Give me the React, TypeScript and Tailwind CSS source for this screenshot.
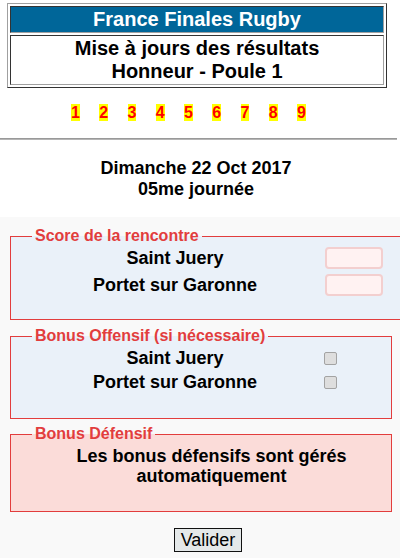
import React from 'react';

const rounds = ['1', '2', '3', '4', '5', '6', '7', '8', '9'];
const teams = ['Saint Juery', 'Portet sur Garonne'];

function Legend({ children }: { children: React.ReactNode }) {
  return (
    <legend className="px-[3px] text-[16px] leading-[18px] font-bold text-[#e23d3d]">{children}</legend>
  );
}

export default function App() {
  return (
    <div className="flex h-[558px] w-[400px] flex-col bg-white font-['Liberation_Sans',Arial,sans-serif] text-black">
      {/* header table */}
      <div className="ml-[7px] mt-[3px] flex w-[380px] flex-col gap-[2px] border border-t-[#a0a0a0] border-l-[#a0a0a0] border-r-[#333] border-b-[#333] p-[2px]">
        <div className="border border-t-[#333] border-l-[#333] border-r-[#a0a0a0] border-b-[#a0a0a0] bg-[#006699] py-px text-center text-[20px] leading-[23px] font-bold text-white">
          France Finales Rugby
        </div>
        <div className="border border-t-[#333] border-l-[#333] border-r-[#a0a0a0] border-b-[#a0a0a0] py-px text-center text-[20px] leading-[23px] font-bold">
          <div>Mise à jours des résultats</div>
          <div>Honneur - Poule 1</div>
        </div>
      </div>

      {/* journées */}
      <div className="ml-[71px] mt-[16px] flex gap-[19.35px]">
        {rounds.map((r) => (
          <span key={r} className="bg-[#ffff00] text-[16px] leading-[17px] font-bold text-[#ff0000]">
            {r}
          </span>
        ))}
      </div>

      <div className="mt-[17px] w-[397px] border-t border-b border-t-[#999] border-b-[#b5b5b5]" />

      <div className="mt-[17.5px] w-[392px] text-center text-[18px] leading-[21px] font-bold">
        <div>Dimanche 22 Oct 2017</div>
        <div>05me journée</div>
      </div>

      <div className="mt-[17.5px] flex flex-1 flex-col bg-[#f9f9f9] pt-[10px]">
        <fieldset className="ml-[10px] w-[382px] border border-[#e23d3d] bg-[#eaf1f9] px-[21px] pt-[2px] pb-[23px]">
          <Legend>Score de la rencontre</Legend>
          <div className="flex flex-col gap-[5px]">
            {teams.map((t) => (
              <div key={t} className="flex items-center">
                <div className="w-[286px] text-center text-[18px] leading-[21px] font-bold">{t}</div>
                <input
                  type="text"
                  className="ml-[7px] h-[22px] w-[58px] rounded-[4px] border-2 border-[#f3cfcf] bg-[#fff2f2] outline-none"
                />
              </div>
            ))}
          </div>
        </fieldset>

        <fieldset className="ml-[10px] mt-[7px] w-[382px] border border-[#e23d3d] bg-[#eaf1f9] px-[21px] pt-[1px] pb-[24px]">
          <Legend>Bonus Offensif (si nécessaire)</Legend>
          {teams.map((t) => (
            <div key={t} className="flex h-[24px] items-center">
              <div className="w-[286px] text-center text-[18px] leading-[21px] font-bold">{t}</div>
              <input
                type="checkbox"
                className="ml-[6px] h-[13px] w-[13px] appearance-none rounded-[2px] border border-[#a3a3a3] bg-[#dedede]"
              />
            </div>
          ))}
        </fieldset>

        <fieldset className="ml-[10px] mt-[6px] w-[382px] border border-[#e23d3d] bg-[#fbdcd9] px-[21px] pt-[3px] pb-[25px]">
          <Legend>Bonus Défensif</Legend>
          <div className="pl-[21px] text-center text-[18px] leading-[20px] font-bold">
            <div>Les bonus défensifs sont gérés</div>
            <div>automatiquement</div>
          </div>
        </fieldset>

        <button className="ml-[174px] mt-[16px] h-[24px] w-[68px] border border-[#111] bg-[#e4e8e9] text-[18px] leading-[22px]">
          Valider
        </button>
      </div>
    </div>
  );
}
